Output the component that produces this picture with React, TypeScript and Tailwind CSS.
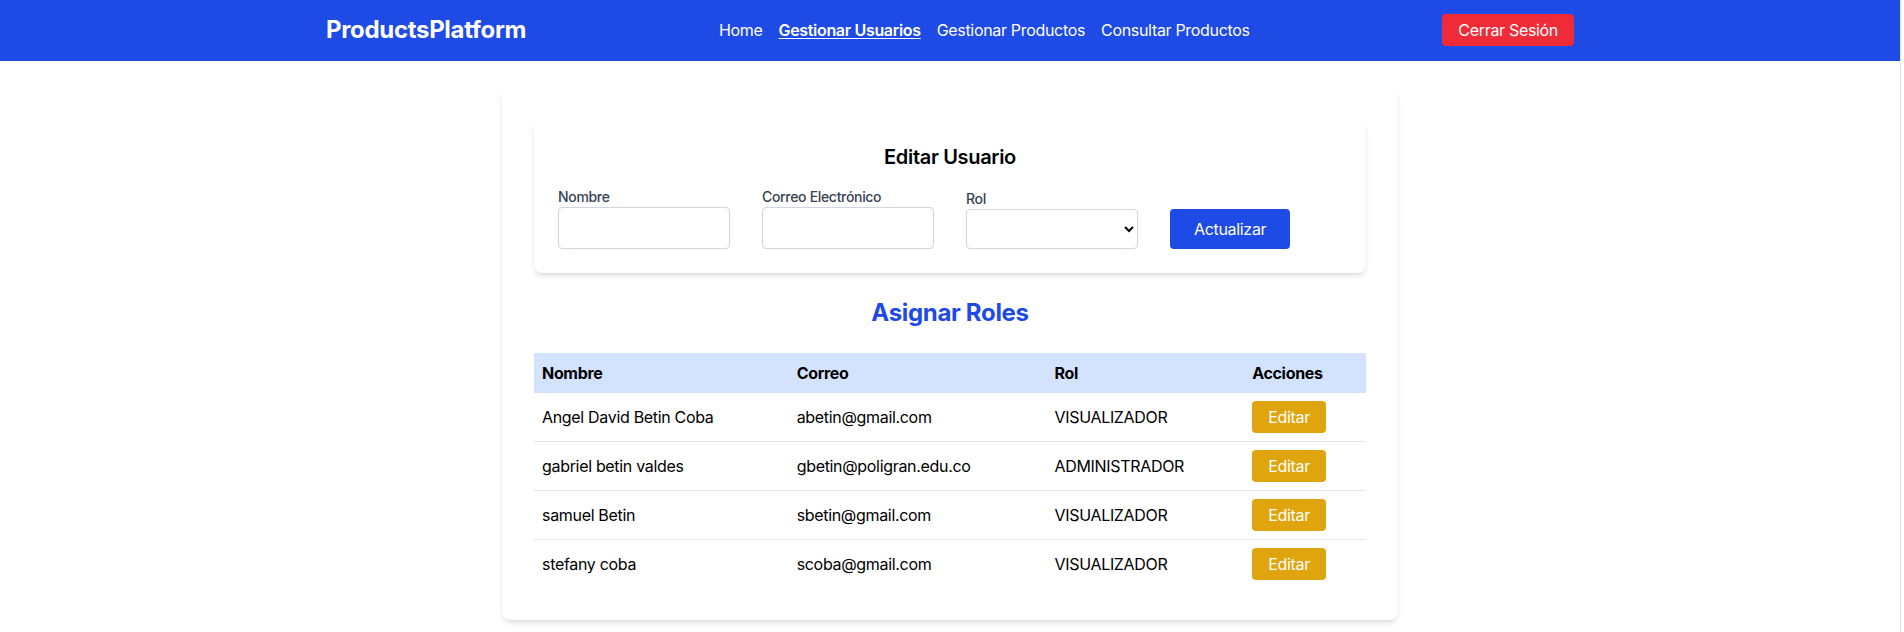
import React, { useState } from 'react';

interface Usuario {
  nombre: string;
  correo: string;
  rol: string;
}

const usuarios: Usuario[] = [
  { nombre: 'Angel David Betin Coba', correo: 'abetin@gmail.com', rol: 'VISUALIZADOR' },
  { nombre: 'gabriel betin valdes', correo: 'gbetin@poligran.edu.co', rol: 'ADMINISTRADOR' },
  { nombre: 'samuel Betin', correo: 'sbetin@gmail.com', rol: 'VISUALIZADOR' },
  { nombre: 'stefany coba', correo: 'scoba@gmail.com', rol: 'VISUALIZADOR' },
];

const App: React.FC = () => {
  const [nombre, setNombre] = useState<string>('');
  const [correo, setCorreo] = useState<string>('');
  const [rol, setRol] = useState<string>('');

  return (
    <div className="min-h-screen w-[1901px] border-r border-[#e3e3e3] bg-white font-['Inter','Liberation_Sans',sans-serif] tracking-[-0.02em] text-black">
      <nav className="bg-[#1e4ae5] h-[61px]">
        <div className="max-w-7xl mx-auto px-4 h-full flex items-center justify-between">
          <span className="text-white text-2xl font-bold -mt-[2px]">ProductsPlatform</span>
          <div className="flex items-center gap-4 text-white text-base -mt-[2px]">
            <a href="#">Home</a>
            <a href="#" className="font-semibold underline underline-offset-2">Gestionar Usuarios</a>
            <a href="#">Gestionar Productos</a>
            <a href="#">Consultar Productos</a>
          </div>
          <button className="bg-[#ee2b37] text-white text-base px-4 py-1 rounded -mt-[2px]">Cerrar Sesión</button>
        </div>
      </nav>

      <main className="max-w-4xl mx-auto mt-[26px] bg-white rounded-lg shadow-md p-8">
        <div className="bg-white rounded-lg shadow-md p-6">
          <h2 className="text-xl font-semibold text-center mb-4">Editar Usuario</h2>
          <div className="grid grid-cols-4 gap-8 items-end">
            <div>
              <label className="block text-sm font-medium text-gray-700">Nombre</label>
              <input
                type="text"
                value={nombre}
                onChange={(e) => setNombre(e.target.value)}
                className="w-full h-[42px] px-3 border border-gray-300 rounded outline-none"
              />
            </div>
            <div>
              <label className="block text-sm font-medium text-gray-700">Correo Electrónico</label>
              <input
                type="email"
                value={correo}
                onChange={(e) => setCorreo(e.target.value)}
                className="w-full h-[42px] px-3 border border-gray-300 rounded outline-none"
              />
            </div>
            <div>
              <label className="block text-sm font-medium text-gray-700">Rol</label>
              <select
                value={rol}
                onChange={(e) => setRol(e.target.value)}
                className="w-full h-[40px] px-2 border border-gray-300 rounded bg-white outline-none"
              >
                <option value=""></option>
                <option value="ADMINISTRADOR">ADMINISTRADOR</option>
                <option value="VISUALIZADOR">VISUALIZADOR</option>
              </select>
            </div>
            <div>
              <button className="bg-[#1e4ae5] text-white text-base px-6 h-10 rounded">Actualizar</button>
            </div>
          </div>
        </div>

        <h2 className="text-2xl font-bold text-[#1e4ae5] text-center mt-6 mb-6">Asignar Roles</h2>

        <table className="w-full text-left text-base">
          <thead className="bg-[#d4e3fd]">
            <tr>
              <th className="px-2 py-2 font-bold">Nombre</th>
              <th className="px-2 py-2 font-bold">Correo</th>
              <th className="px-2 py-2 font-bold">Rol</th>
              <th className="px-2 py-2 font-bold">Acciones</th>
            </tr>
          </thead>
          <tbody className="divide-y divide-gray-200">
            {usuarios.map((u) => (
              <tr key={u.correo}>
                <td className="px-2 py-2">{u.nombre}</td>
                <td className="px-2 py-2">{u.correo}</td>
                <td className="px-2 py-2">{u.rol}</td>
                <td className="px-2 py-2">
                  <button className="bg-[#e0a40e] text-white px-4 py-1 rounded">Editar</button>
                </td>
              </tr>
            ))}
          </tbody>
        </table>
      </main>
    </div>
  );
};

export default App;
